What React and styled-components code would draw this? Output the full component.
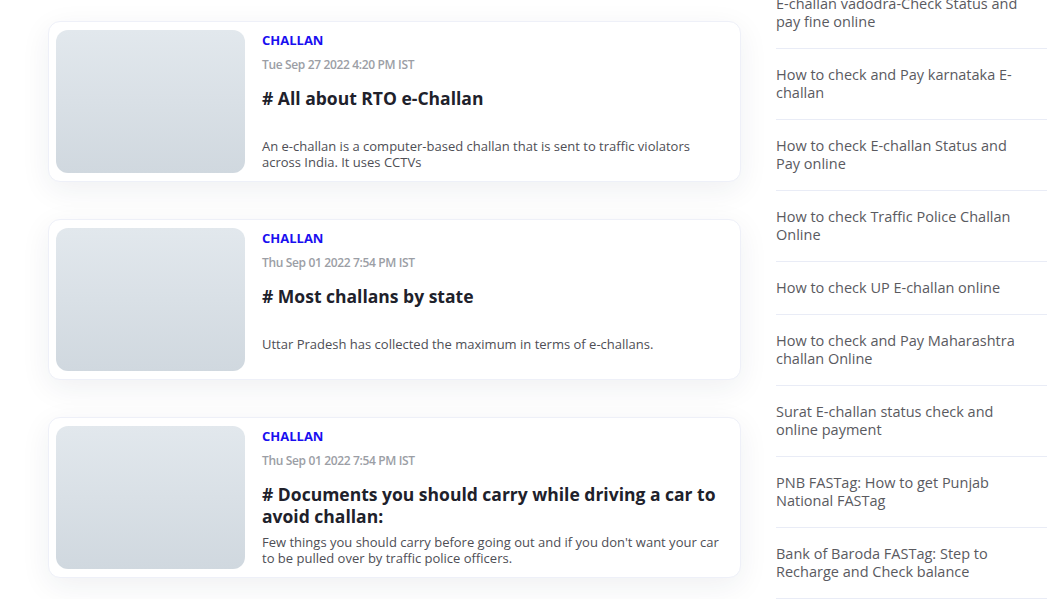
import React from "react";
import styled, { createGlobalStyle } from "styled-components";

const GlobalStyle = createGlobalStyle`
  html, body {
    margin: 0;
    padding: 0;
    background: #ffffff;
    overflow: hidden;
  }
  body {
    font-family: "Open Sans", Lato, sans-serif;
  }
`;

const posts = [
  {
    category: "CHALLAN",
    date: "Tue Sep 27 2022 4:20 PM IST",
    title: "# All about RTO e-Challan",
    text: "An e-challan is a computer-based challan that is sent to traffic violators across India. It uses CCTVs",
  },
  {
    category: "CHALLAN",
    date: "Thu Sep 01 2022 7:54 PM IST",
    title: "# Most challans by state",
    text: "Uttar Pradesh has collected the maximum in terms of e-challans.",
  },
  {
    category: "CHALLAN",
    date: "Thu Sep 01 2022 7:54 PM IST",
    title: "# Documents you should carry while driving a car to avoid challan:",
    text: "Few things you should carry before going out and if you don't want your car to be pulled over by traffic police officers.",
  },
];

const links = [
  "E-challan vadodra-Check Status and pay fine online",
  "How to check and Pay karnataka E-challan",
  "How to check E-challan Status and Pay online",
  "How to check Traffic Police Challan Online",
  "How to check UP E-challan online",
  "How to check and Pay Maharashtra challan Online",
  "Surat E-challan status check and online payment",
  "PNB FASTag: How to get Punjab National FASTag",
  "Bank of Baroda FASTag: Step to Recharge and Check balance",
];

const Layout = styled.div`
  display: flex;
  align-items: flex-start;
  gap: 35px;
  padding-left: 48px;
`;

const Feed = styled.div`
  display: flex;
  flex-direction: column;
  gap: 37px;
  width: 693px;
  flex-shrink: 0;
  margin-top: 21px;
`;

const Card = styled.article`
  display: flex;
  gap: 17px;
  height: 161px;
  box-sizing: border-box;
  padding: 8px 16px 8px 7px;
  background: #fff;
  border: 1px solid #eef0f8;
  border-radius: 12px;
  box-shadow: 0 8px 30px rgba(30, 40, 70, 0.07);
`;

const Thumb = styled.div`
  width: 189px;
  height: 143px;
  flex-shrink: 0;
  border-radius: 12px;
  background: linear-gradient(180deg, #e2e8ed 0%, #d0d8df 100%);
`;

const Body = styled.div`
  display: flex;
  flex-direction: column;
  min-width: 0;
  padding-top: 1px;
`;

const Category = styled.span`
  font-size: 13px;
  line-height: 18px;
  font-weight: 700;
  color: #1a0ff0;
`;

const Date = styled.span`
  margin-top: 8px;
  font-size: 12px;
  line-height: 16px;
  font-weight: 600;
  color: #9b9ea5;
  letter-spacing: -0.35px;
`;

const Title = styled.h2`
  margin: 14px 0 0;
  min-height: 44px;
  font-size: 17.5px;
  line-height: 22px;
  font-weight: 700;
  color: #20212b;
`;

const Excerpt = styled.p`
  margin: 7px 0 0;
  font-size: 13px;
  line-height: 16px;
  font-weight: 400;
  color: #4e4e55;
`;

const Sidebar = styled.ul`
  list-style: none;
  margin: -22px 0 0;
  padding: 0;
  width: 271px;
  flex-shrink: 0;
`;

const LinkItem = styled.li`
  padding: 17px 21px 17px 0;
  border-bottom: 1px solid #e9ecf6;
  font-size: 14.5px;
  line-height: 18px;
  color: #5a5a5f;
`;

const PostCard = ({ post }) => (
  <Card>
    <Thumb />
    <Body>
      <Category>{post.category}</Category>
      <Date>{post.date}</Date>
      <Title>{post.title}</Title>
      <Excerpt>{post.text}</Excerpt>
    </Body>
  </Card>
);

const App = () => (
  <>
    <GlobalStyle />
    <Layout>
      <Feed>
        {posts.map((post, i) => (
          <PostCard key={i} post={post} />
        ))}
      </Feed>
      <Sidebar>
        {links.map((link) => (
          <LinkItem key={link}>{link}</LinkItem>
        ))}
      </Sidebar>
    </Layout>
  </>
);

export default App;
